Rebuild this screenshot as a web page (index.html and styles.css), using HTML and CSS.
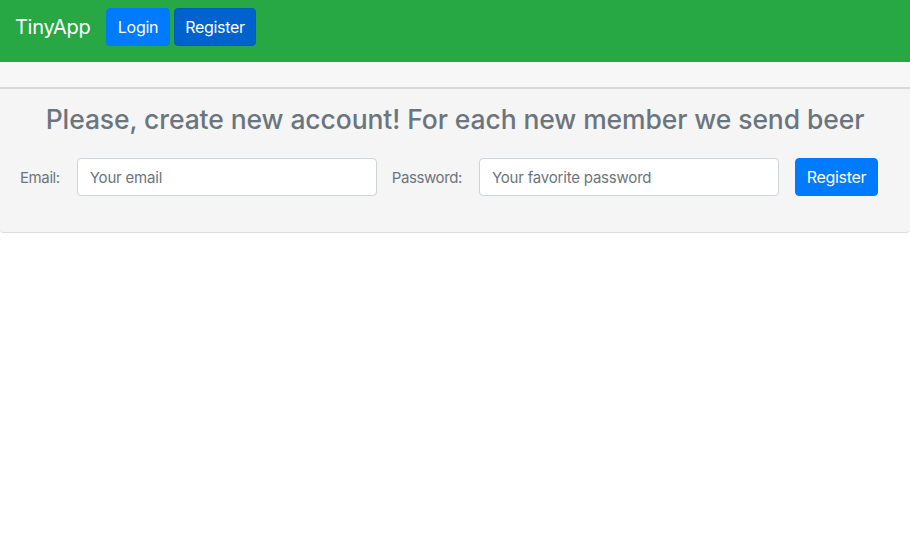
FILE: index.html
```html
<!DOCTYPE html>
<html>
<head>
<meta charset="utf-8">
<link rel="stylesheet" href="styles.css">
</head>
<body>
<nav class="navbar">
  <span class="brand">TinyApp</span>
  <a class="btn btn-primary">Login</a>
  <a class="btn btn-active">Register</a>
</nav>
<div class="spacer"></div>
<main class="card">
  <h3 class="title">Please, create new account! For each new member we send beer</h3>
  <form class="form">
    <label class="label">Email:</label>
    <input class="input" type="text" placeholder="Your email">
    <label class="label label-pw">Password:</label>
    <input class="input" type="password" placeholder="Your favorite password">
    <button class="btn btn-primary btn-submit" type="button">Register</button>
  </form>
</main>
</body>
</html>
```
FILE: styles.css
```css
* { box-sizing: border-box; }
html, body { margin: 0; padding: 0; background: #fff; }
body {
  font-family: Inter, "Helvetica Neue", Arial, sans-serif;
  font-size: 16px;
  color: #212529;
}
.navbar {
  background: #28a745;
  height: 62px;
  display: flex;
  align-items: flex-start;
  padding: 8px 15px 0;
}
.brand {
  color: #fff;
  font-size: 20px;
  margin-right: 16px;
  line-height: 38px;
  letter-spacing: -0.3px;
}
.btn {
  display: inline-flex;
  align-items: center;
  justify-content: center;
  height: 38px;
  padding: 0 10.5px;
  border-radius: 4px;
  color: #fff;
  font-size: 16px;
  font-family: inherit;
  border: 1px solid transparent;
  letter-spacing: -0.3px;
}
.btn-primary { background: #007bff; border-color: #007bff; }
.btn-active { background: #0062cc; border-color: #005cbf; margin-left: 4px; }
.spacer {
  height: 27px;
  background: #f7f7f7;
  border-bottom: 2px solid #d9d9d9;
}
.card {
  background: #f5f5f5;
  border-bottom: 1px solid #dedede;
  border-radius: 0 0 4px 4px;
  padding: 14px 0 0;
  height: 144px;
}
.title {
  margin: 0;
  text-align: center;
  font-size: 26.5px;
  font-weight: 500;
  color: #6c757d;
  line-height: 32px;
  letter-spacing: -0.1px;
}
.form {
  display: flex;
  align-items: center;
  margin-top: 23px;
  padding-left: 20px;
}
.label {
  color: #6c757d;
  font-size: 15px;
  margin-right: 17px;
  letter-spacing: -0.4px;
}
.label-pw { margin-left: 15px; }
.input {
  width: 300px;
  height: 38px;
  border: 1px solid #ced4da;
  border-radius: 4px;
  background: #fff;
  padding: 0 12px;
  font-family: inherit;
  font-size: 15px;
  color: #495057;
  letter-spacing: -0.2px;
}
.input::placeholder { color: #6c757d; }
.btn-submit {
  margin-left: 16px;
  width: 83px;
  padding: 0;
  cursor: pointer;
}
```
